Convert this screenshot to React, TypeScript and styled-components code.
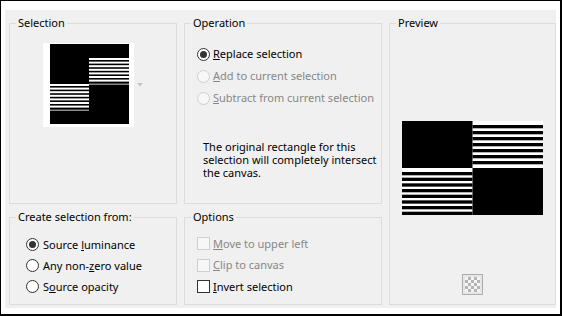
import React from "react";
import styled, { createGlobalStyle } from "styled-components";

const Global = createGlobalStyle`
  html, body { margin: 0; padding: 0; background: #fff; }
  body {
    font-family: "Noto Sans", "Open Sans", sans-serif;
    font-size: 11px;
    color: #000;
  }
`;

const Frame = styled.div`
  box-sizing: border-box;
  width: 562px;
  height: 316px;
  border: solid #000;
  border-width: 1px 2px 2px 1px;
  background: #fff;
  padding: 9px 4px 6px 4px;
`;

const Dialog = styled.div`
  box-sizing: border-box;
  height: 100%;
  background: #f0f0f0;
  padding: 5px 0 3px 4px;
  display: grid;
  grid-template-columns: 168px 198px 167px;
  grid-template-rows: 189px 96px;
  column-gap: 7px;
  row-gap: 5px;
`;

const Group = styled.fieldset<{ $tall?: boolean }>`
  box-sizing: border-box;
  margin: 0;
  padding: 0;
  min-width: 0;
  border: 1px solid #dcdcdc;
  display: flex;
  flex-direction: column;
  grid-row: ${p => (p.$tall ? "span 2" : "auto")};
`;

const Legend = styled.legend`
  margin-left: 6px;
  padding: 0 2px;
  line-height: 16px;
  font-size: 11px;
`;

const SelectionBody = styled.div`
  display: flex;
  align-items: center;
  padding: 12px 0 0 33px;
`;

const Thumb = styled.div`
  box-sizing: border-box;
  width: 91px;
  height: 84px;
  background: #fff;
  padding: 1px 5px 3px 7px;
  svg { display: block; }
`;

const DropArrow = styled.svg`
  margin-left: 3px;
`;

const OptionList = styled.div<{ $pad: string }>`
  display: flex;
  flex-direction: column;
  padding: ${p => p.$pad};
`;

const Row = styled.div<{ $h: number; $gap: number }>`
  display: flex;
  align-items: center;
  height: ${p => p.$h}px;
  gap: ${p => p.$gap}px;
`;

const Label = styled.span<{ $disabled?: boolean }>`
  color: ${p => (p.$disabled ? "#878787" : "#000")};
  white-space: nowrap;
  line-height: 14px;
`;

const Radio = styled.span<{ $checked?: boolean; $disabled?: boolean }>`
  box-sizing: border-box;
  width: 13px;
  height: 13px;
  flex: none;
  border-radius: 50%;
  border: 1px solid ${p => (p.$disabled ? "#cfcfcf" : "#333")};
  background: ${p => (p.$disabled ? "#f7f7f7" : "#fff")};
  display: inline-flex;
  align-items: center;
  justify-content: center;
  &::after {
    content: "";
    width: 7px;
    height: 7px;
    border-radius: 50%;
    background: #333;
    display: ${p => (p.$checked ? "block" : "none")};
  }
`;

const Check = styled.span<{ $disabled?: boolean }>`
  box-sizing: border-box;
  width: 13px;
  height: 13px;
  flex: none;
  border: 1px solid ${p => (p.$disabled ? "#cfcfcf" : "#333")};
  background: ${p => (p.$disabled ? "#f7f7f7" : "#fff")};
`;

const Note = styled.p`
  margin: 31px 0 0 6px;
  line-height: 13px;
  width: 176px;
`;

const PreviewBody = styled.div`
  display: flex;
  flex-direction: column;
  align-items: center;
  padding-top: 90px;
  svg { display: block; }
`;

const CheckerButton = styled.div`
  box-sizing: border-box;
  width: 21px;
  height: 21px;
  margin-top: 59px;
  border: 1px solid #adadad;
  background: #e6e6e6;
  padding: 2px;
  &::before {
    content: "";
    display: block;
    width: 15px;
    height: 15px;
    background: repeating-conic-gradient(#b5b5b5 0 25%, #f4f4f4 0 50%) 0 0 / 6px 6px;
  }
`;

const stripes = (x: number, y0: number, n: number, step: number, w: number, h: number, color: string) =>
  Array.from({ length: n }, (_, k) => (
    <rect key={`${x}-${y0}-${k}`} x={x} y={y0 + k * step} width={w} height={h} fill={color} />
  ));

const ThumbPicture = () => (
  <svg width="79" height="80" viewBox="0 0 79 80">
    <rect width="79" height="80" fill="#000" />
    {stripes(39, 14, 7, 3.6, 40, 2, "#fff")}
    <rect x="39" y="39.5" width="40" height="1.5" fill="#8a8a8a" />
    {stripes(0, 40, 7, 3.6, 39, 2, "#fff")}
    <rect x="0" y="65.5" width="39" height="1.5" fill="#8a8a8a" />
  </svg>
);

const PreviewPicture = () => (
  <svg width="141" height="94" viewBox="0 0 141 94">
    <rect width="141" height="94" fill="#000" />
    <rect x="70.5" y="0" width="70.5" height="47" fill="#fff" />
    {stripes(70.5, 4, 7, 6, 70.5, 3.3, "#000")}
    <rect x="0" y="47" width="70.5" height="47" fill="#fff" />
    {stripes(0, 51, 8, 5.67, 70.5, 3.3, "#000")}
  </svg>
);

type Opt = { text: React.ReactNode; checked?: boolean; disabled?: boolean };

const operations: Opt[] = [
  { text: <><u>R</u>eplace selection</>, checked: true },
  { text: <><u>A</u>dd to current selection</>, disabled: true },
  { text: <><u>S</u>ubtract from current selection</>, disabled: true },
];

const sources: Opt[] = [
  { text: <>Source <u>l</u>uminance</>, checked: true },
  { text: <>Any non-<u>z</u>ero value</> },
  { text: <>S<u>o</u>urce opacity</> },
];

const options: Opt[] = [
  { text: <><u>M</u>ove to upper left</>, disabled: true },
  { text: <><u>C</u>lip to canvas</>, disabled: true },
  { text: <><u>I</u>nvert selection</> },
];

export default function App() {
  return (
    <>
      <Global />
      <Frame>
        <Dialog>
          <Group>
            <Legend>Selection</Legend>
            <SelectionBody>
              <Thumb>
                <ThumbPicture />
              </Thumb>
              <DropArrow width="6" height="4" viewBox="0 0 6 4">
                <polygon points="0,0 6,0 3,3.5" fill="#c4c4c4" />
              </DropArrow>
            </SelectionBody>
          </Group>

          <Group>
            <Legend>Operation</Legend>
            <OptionList $pad="12px 0 0 12px">
              {operations.map((o, i) => (
                <Row key={i} $h={22} $gap={3}>
                  <Radio $checked={o.checked} $disabled={o.disabled} />
                  <Label $disabled={o.disabled}>{o.text}</Label>
                </Row>
              ))}
              <Note>
                The original rectangle for this selection will completely intersect the canvas.
              </Note>
            </OptionList>
          </Group>

          <Group $tall>
            <Legend>Preview</Legend>
            <PreviewBody>
              <PreviewPicture />
              <CheckerButton />
            </PreviewBody>
          </Group>

          <Group>
            <Legend>Create selection from:</Legend>
            <OptionList $pad="9px 0 0 16px">
              {sources.map((o, i) => (
                <Row key={i} $h={21} $gap={4}>
                  <Radio $checked={o.checked} />
                  <Label>{o.text}</Label>
                </Row>
              ))}
            </OptionList>
          </Group>

          <Group>
            <Legend>Options</Legend>
            <OptionList $pad="8px 0 0 12px">
              {options.map((o, i) => (
                <Row key={i} $h={21.5} $gap={3}>
                  <Check $disabled={o.disabled} />
                  <Label $disabled={o.disabled}>{o.text}</Label>
                </Row>
              ))}
            </OptionList>
          </Group>
        </Dialog>
      </Frame>
    </>
  );
}
